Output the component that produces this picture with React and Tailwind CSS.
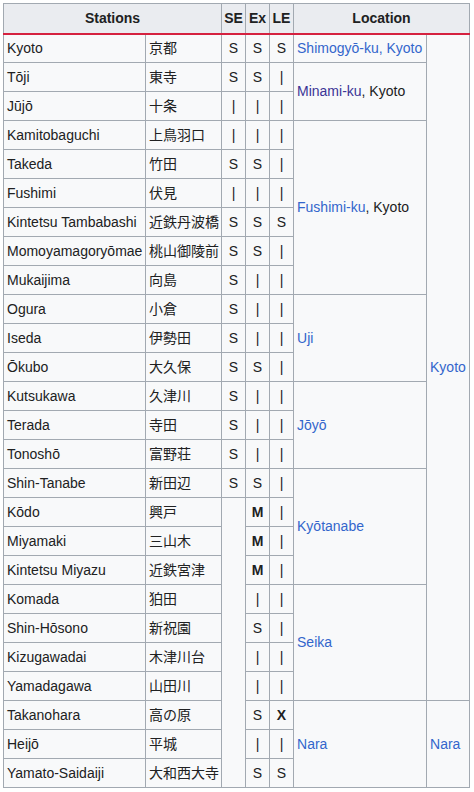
const rows = [
  ["Kyoto", "京都", "S", "S", "S"],
  ["Tōji", "東寺", "S", "S", "|"],
  ["Jūjō", "十条", "|", "|", "|"],
  ["Kamitobaguchi", "上鳥羽口", "|", "|", "|"],
  ["Takeda", "竹田", "S", "S", "|"],
  ["Fushimi", "伏見", "|", "|", "|"],
  ["Kintetsu Tambabashi", "近鉄丹波橋", "S", "S", "S"],
  ["Momoyamagoryōmae", "桃山御陵前", "S", "S", "|"],
  ["Mukaijima", "向島", "S", "|", "|"],
  ["Ogura", "小倉", "S", "|", "|"],
  ["Iseda", "伊勢田", "S", "|", "|"],
  ["Ōkubo", "大久保", "S", "S", "|"],
  ["Kutsukawa", "久津川", "S", "|", "|"],
  ["Terada", "寺田", "S", "|", "|"],
  ["Tonoshō", "富野荘", "S", "|", "|"],
  ["Shin-Tanabe", "新田辺", "S", "S", "|"],
  ["Kōdo", "興戸", null, "M", "|"],
  ["Miyamaki", "三山木", null, "M", "|"],
  ["Kintetsu Miyazu", "近鉄宮津", null, "M", "|"],
  ["Komada", "狛田", null, "|", "|"],
  ["Shin-Hōsono", "新祝園", null, "S", "|"],
  ["Kizugawadai", "木津川台", null, "|", "|"],
  ["Yamadagawa", "山田川", null, "|", "|"],
  ["Takanohara", "高の原", null, "S", "X"],
  ["Heijō", "平城", null, "|", "|"],
  ["Yamato-Saidaiji", "大和西大寺", null, "S", "S"],
];

const blue = "text-[#3366cc]";

const locations = {
  0: { span: 1, node: <span className={blue}>Shimogyō-ku, Kyoto</span> },
  1: { span: 2, node: <><span className="text-[#3b3596]">Minami-ku</span>, Kyoto</> },
  3: { span: 6, node: <><span className={blue}>Fushimi-ku</span>, Kyoto</> },
  9: { span: 3, node: <span className={blue}>Uji</span> },
  12: { span: 3, node: <span className={blue}>Jōyō</span> },
  15: { span: 4, node: <span className={blue}>Kyōtanabe</span> },
  19: { span: 4, node: <span className={blue}>Seika</span> },
  23: { span: 3, node: <span className={blue}>Nara</span> },
};

const prefectures = {
  0: { span: 23, node: <span className={blue}>Kyoto</span> },
  23: { span: 3, node: <span className={blue}>Nara</span> },
};

const cell = "border border-[#a2a9b1] px-[3px] py-0 h-[29px] align-middle";

function Mark({ v }) {
  if (v === "M" || v === "X") return <b className="font-bold">{v}</b>;
  return <span>{v}</span>;
}

export default function App() {
  return (
    <div className="bg-white w-[474px] h-[792px] pt-[3px] pl-[3px]"
      style={{ fontFamily: "'Liberation Sans', Arial, 'Noto Sans CJK JP', sans-serif" }}>
      <table className="table-fixed border-collapse w-[466px] bg-[#f8f9fa] text-[14px] leading-[17px] text-[#202122]">
        <colgroup>
          <col className="w-[142px]" />
          <col className="w-[76px]" />
          <col className="w-[24px]" />
          <col className="w-[24px]" />
          <col className="w-[24px]" />
          <col className="w-[133px]" />
          <col className="w-[43px]" />
        </colgroup>
        <thead>
          <tr className="bg-[#eaecf0] font-bold">
            <th colSpan={2} className="border border-[#a2a9b1] border-b-2 border-b-[#d5213f] h-[30px] px-0 text-center">Stations</th>
            <th className="border border-[#a2a9b1] border-b-2 border-b-[#d5213f] px-0 text-center">SE</th>
            <th className="border border-[#a2a9b1] border-b-2 border-b-[#d5213f] px-0 text-center">Ex</th>
            <th className="border border-[#a2a9b1] border-b-2 border-b-[#d5213f] px-0 text-center">LE</th>
            <th colSpan={2} className="border border-[#a2a9b1] border-b-2 border-b-[#d5213f] px-0 text-center">Location</th>
          </tr>
        </thead>
        <tbody>
          {rows.map((r, i) => (
            <tr key={i}>
              <td className={cell + " whitespace-nowrap"}>{r[0]}</td>
              <td className={cell + " whitespace-nowrap"}>{r[1]}</td>
              {i < 16 ? (
                <td className={cell + " text-center px-0"}><Mark v={r[2]} /></td>
              ) : i === 16 ? (
                <td rowSpan={10} className={cell + " px-0"}></td>
              ) : null}
              <td className={cell + " text-center px-0"}><Mark v={r[3]} /></td>
              <td className={cell + " text-center px-0"}><Mark v={r[4]} /></td>
              {locations[i] && (
                <td rowSpan={locations[i].span} className={cell + " whitespace-nowrap"}>{locations[i].node}</td>
              )}
              {prefectures[i] && (
                <td rowSpan={prefectures[i].span} className={cell + " whitespace-nowrap"}>{prefectures[i].node}</td>
              )}
            </tr>
          ))}
        </tbody>
      </table>
    </div>
  );
}
